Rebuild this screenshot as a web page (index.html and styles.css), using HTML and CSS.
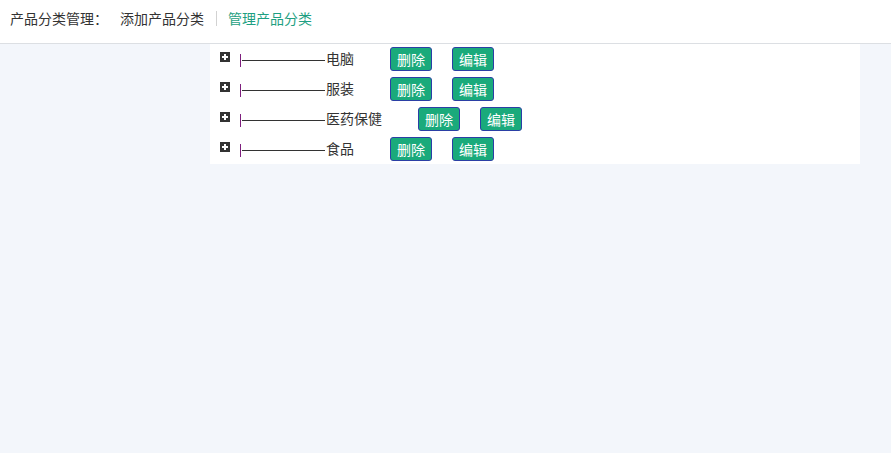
FILE: index.html
```html
<!DOCTYPE html>
<html lang="zh">
<head>
<meta charset="utf-8">
<title>产品分类管理</title>
<link rel="stylesheet" href="styles.css">
</head>
<body>
<div class="header">
  <span class="title">产品分类管理：</span>
  <a class="nav">添加产品分类</a>
  <span class="sep"></span>
  <a class="nav active">管理产品分类</a>
</div>
<div class="panel">
  <div class="row">
    <span class="plus"></span><span class="pipe"></span><span class="line"></span><span class="name">电脑</span>
    <button class="btn">删除</button><button class="btn">编辑</button>
  </div>
  <div class="row">
    <span class="plus"></span><span class="pipe"></span><span class="line"></span><span class="name">服装</span>
    <button class="btn">删除</button><button class="btn">编辑</button>
  </div>
  <div class="row">
    <span class="plus"></span><span class="pipe"></span><span class="line"></span><span class="name">医药保健</span>
    <button class="btn">删除</button><button class="btn">编辑</button>
  </div>
  <div class="row">
    <span class="plus"></span><span class="pipe"></span><span class="line"></span><span class="name">食品</span>
    <button class="btn">删除</button><button class="btn">编辑</button>
  </div>
</div>
</body>
</html>
```
FILE: styles.css
```css
html, body {
  margin: 0;
  padding: 0;
  background: #f3f6fb;
  font-family: "Noto Sans CJK SC", "Noto Sans", sans-serif;
  font-size: 14px;
  color: #333;
}
.header {
  box-sizing: border-box;
  height: 44px;
  background: #fff;
  border-bottom: 1px solid #dcdfe3;
  display: flex;
  align-items: center;
  padding: 0 0 8px 10px;
  line-height: 20px;
}
.title { color: #333; }
.nav { color: #333; text-decoration: none; }
.title + .nav { margin-left: 12px; }
.nav.active { color: #1e9f82; }
.sep {
  width: 1px;
  height: 15px;
  background: #d2d2d2;
  margin: 1px 11px 0 12px;
}
.panel {
  margin: 0 0 0 210px;
  width: 650px;
  background: #fff;
  box-sizing: border-box;
  padding-left: 10px;
}
.row {
  height: 30px;
  display: flex;
  align-items: center;
}
.plus {
  position: relative;
  width: 10px;
  height: 10px;
  background: #333;
  margin-top: -4px;
}
.plus::before, .plus::after {
  content: "";
  position: absolute;
  background: #fff;
}
.plus::before { left: 2px; top: 4px; width: 6px; height: 2px; }
.plus::after { left: 4px; top: 2px; width: 2px; height: 6px; }
.pipe {
  width: 1px;
  height: 13px;
  background: #7d1f7d;
  margin: 3px 0 0 10px;
}
.line {
  width: 83px;
  height: 1px;
  background: #333;
  margin: 2px 0 0 1px;
}
.name {
  margin-left: 1px;
  line-height: 20px;
  margin-top: -2px;
  color: #333;
}
.btn {
  box-sizing: border-box;
  height: 24px;
  padding: 0 6px;
  border: 1px solid #2b3fa5;
  border-radius: 3px;
  background: #1aaa7b;
  color: #fff;
  font-family: "Noto Sans CJK SC", "Noto Sans", sans-serif;
  font-size: 14px;
  line-height: 22px;
  margin-left: 36px;
}
.btn + .btn { margin-left: 20px; }
```
